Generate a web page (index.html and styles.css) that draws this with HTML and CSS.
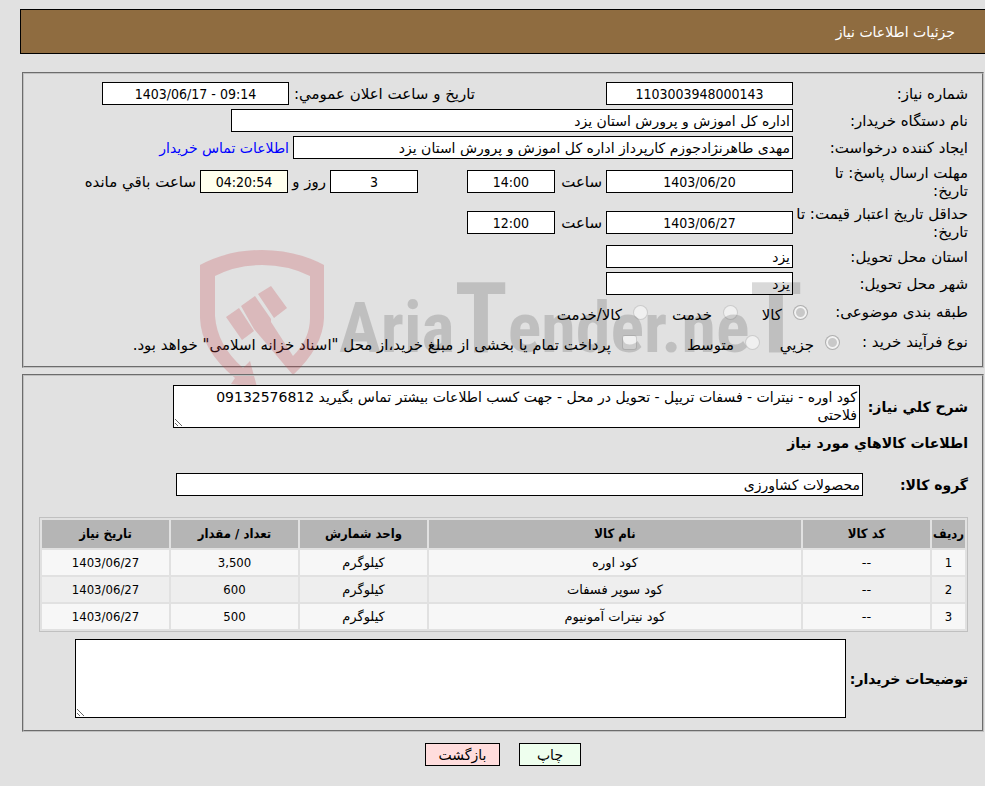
FILE: index.html
```html
<!DOCTYPE html>
<html lang="fa" dir="rtl">
<head>
  <meta charset="utf-8">
  <title>جزئیات اطلاعات نیاز</title>
  <link rel="stylesheet" href="styles.css">
</head>
<body>

<header class="title-bar">جزئیات اطلاعات نیاز</header>

<form class="need-form">
  <fieldset class="panel">
    <div class="row">
      <label class="caption" for="need-no">شماره نیاز:</label>
      <input class="box center" type="text" id="need-no" value="1103003948000143" readonly>
      <label class="announce" for="announce-date">تاریخ و ساعت اعلان عمومي:</label>
      <input class="box center" type="text" id="announce-date" value="1403/06/17 - 09:14" dir="ltr" readonly>
    </div>

    <div class="row">
      <label class="caption" for="buyer-org">نام دستگاه خریدار:</label>
      <input class="box org" type="text" id="buyer-org" value="اداره کل اموزش و پرورش استان یزد" readonly>
    </div>

    <div class="row">
      <label class="caption" for="creator">ایجاد کننده درخواست:</label>
      <input class="box creator" type="text" id="creator" value="مهدی طاهرنژادجوزم کارپرداز اداره کل اموزش و پرورش استان یزد" readonly>
      <a href="#">اطلاعات تماس خریدار</a>
    </div>

    <div class="row tall">
      <label class="caption" for="reply-date">مهلت ارسال پاسخ: تا<br>تاریخ:</label>
      <input class="box center" type="text" id="reply-date" value="1403/06/20" readonly>
      <label class="hour" for="reply-hour">ساعت</label>
      <input class="box small center" type="text" id="reply-hour" value="14:00" readonly>
      <input class="box small center days" type="text" id="days" value="3" readonly>
      <label class="day" for="days">روز و</label>
      <input class="box small center remain" type="text" id="remain" value="04:20:54" readonly>
      <label for="remain">ساعت باقي مانده</label>
    </div>

    <div class="row tall">
      <label class="caption" for="price-date">حداقل تاریخ اعتبار قیمت: تا<br>تاریخ:</label>
      <input class="box center" type="text" id="price-date" value="1403/06/27" readonly>
      <label class="hour" for="price-hour">ساعت</label>
      <input class="box small center" type="text" id="price-hour" value="12:00" readonly>
    </div>

    <div class="row">
      <label class="caption" for="province">استان محل تحویل:</label>
      <input class="box" type="text" id="province" value="یزد" readonly>
    </div>

    <div class="row">
      <label class="caption" for="city">شهر محل تحویل:</label>
      <input class="box" type="text" id="city" value="یزد" readonly>
    </div>

    <div class="row options">
      <span class="caption subject">طبقه بندی موضوعی:</span>
      <label class="option goods"><input type="radio" name="subject" checked disabled> <span>كالا</span></label>
      <label class="option service"><input type="radio" name="subject" disabled> <span>خدمت</span></label>
      <label class="option both"><input type="radio" name="subject" disabled> <span>كالا/خدمت</span></label>
    </div>

    <div class="row options">
      <span class="caption process">نوع فرآیند خرید :</span>
      <label class="option minor"><input type="radio" name="process" checked disabled> <span>جزیي</span></label>
      <label class="option medium"><input type="radio" name="process" disabled> <span>متوسط</span></label>
      <label class="option"><input type="checkbox" disabled> <span>پرداخت تمام یا بخشی از مبلغ خرید،از محل "اسناد خزانه اسلامی" خواهد بود.</span></label>
    </div>

    <svg class="watermark" viewBox="200 250 600 140" width="600" height="140" aria-hidden="true">
      <path class="shield" d="M200 265Q228 250 262 250T324 265V318Q323 347 293 375L254 329L241 306L255 296L271 319L271 322L293 356Q310 339 310 318V276Q288 265 262 265T215 276V316Q217 345 243 368L250 361L257 387L231 384L235 378Q201 350 200 318Z"/>
      <path class="shield" d="M226 317L239 308L254 331L242 340ZM258 294L271 286L287 308L274 318Z"/>
      <text class="brand" x="339" y="352">Aria<tspan class="big">T</tspan>ender.ne<tspan class="big">T</tspan></text>
    </svg>
  </fieldset>

  <fieldset class="panel details">
    <div class="row">
      <label class="strong summary-label" for="summary">شرح کلي نیاز:</label>
      <textarea class="box summary" id="summary" readonly>کود اوره - نیترات - فسفات تریپل - تحویل در محل - جهت کسب اطلاعات بیشتر تماس بگیرید 09132576812
فلاحتی</textarea>
    </div>

    <h2>اطلاعات کالاهاي مورد نیاز</h2>

    <div class="row">
      <label class="strong group-label" for="group">گروه کالا:</label>
      <input class="box group" type="text" id="group" value="محصولات کشاورزی" readonly>
    </div>

    <table class="items">
      <thead>
        <tr>
          <th class="num">ردیف</th>
          <th class="code">کد کالا</th>
          <th>نام کالا</th>
          <th class="unit">واحد شمارش</th>
          <th class="count">تعداد / مقدار</th>
          <th class="date">تاریخ نیاز</th>
        </tr>
      </thead>
      <tbody>
        <tr>
          <td class="digits">1</td>
          <td>--</td>
          <td>کود اوره</td>
          <td>کیلوگرم</td>
          <td class="digits">3,500</td>
          <td class="digits">1403/06/27</td>
        </tr>
        <tr>
          <td class="digits">2</td>
          <td>--</td>
          <td>کود سوپر فسفات</td>
          <td>کیلوگرم</td>
          <td class="digits">600</td>
          <td class="digits">1403/06/27</td>
        </tr>
        <tr>
          <td class="digits">3</td>
          <td>--</td>
          <td>کود نیترات آمونیوم</td>
          <td>کیلوگرم</td>
          <td class="digits">500</td>
          <td class="digits">1403/06/27</td>
        </tr>
      </tbody>
    </table>

    <div class="row notes-row">
      <label class="strong" for="notes">توضیحات خریدار:</label>
      <textarea class="box notes" id="notes" readonly></textarea>
    </div>
  </fieldset>

  <div class="buttons">
    <button class="print" type="button">چاپ</button>
    <button class="back" type="button">بازگشت</button>
  </div>
</form>

</body>
</html>
```
FILE: styles.css
```css
* {
  box-sizing: border-box;
}

body {
  margin: 0;
  background-color: #e1e1e1;
  color: #000;
  font-family: Tahoma, "DejaVu Sans", sans-serif;
  font-size: 14px;
  line-height: 18px;
}

input,
textarea,
button {
  margin: 0;
  font-family: inherit;
  font-size: 14px;
  color: #000;
}

.title-bar {
  margin: 9px 0 18px 20px;
  padding: 13px 30px 12px;
  border: 1px solid #000;
  border-right: none;
  background-color: #8f6c40;
  color: #fff;
}

.need-form {
  margin: 0 1px 0 22px;
}

.panel {
  position: relative;
  margin: 0 0 6px;
  padding: 6px 14px 9px;
  border: 2px groove #c0c0c0;
  min-width: 0;
}

.row {
  display: flex;
  align-items: center;
  gap: 4px;
  min-height: 27px;
}

.row label,
.row a {
  white-space: nowrap;
}

.row label,
.row .caption {
  font-size: 15px;
}

.tall {
  min-height: 41px;
}

.row .caption {
  flex: none;
  width: 171px;
}

a {
  color: #0000ff;
  text-decoration: none;
}

.box {
  width: 187px;
  height: 23px;
  padding: 1px 2px;
  border: 1px solid #000;
  border-radius: 0;
  background-color: #fff;
}

.center,
.digits,
th {
  font-family: Tahoma, "DejaVu Sans Condensed", "DejaVu Sans", sans-serif;
}

.center {
  text-align: center;
}

.announce {
  width: 182px;
  margin-right: 127px;
}

.org {
  width: 562px;
}

.creator {
  width: 500px;
}

.small {
  width: 88px;
}

.hour {
  width: 43px;
}

.days {
  margin-right: 45px;
}

.day {
  width: 34px;
}

.remain {
  background-color: #ffffee;
}

/* radio and checkbox rows */
.options {
  min-height: 30px;
  gap: 0;
}

.option {
  display: flex;
  align-items: center;
  gap: 11px;
}

.option span {
  padding-top: 6px;
}

.row .subject {
  width: 160px;
}

.row .process {
  width: 128px;
}

.goods {
  width: 70px;
}

.service {
  width: 90px;
}

.minor {
  width: 80px;
}

.medium {
  width: 123px;
}

.option input {
  appearance: none;
  flex: none;
  width: 15px;
  height: 15px;
  border: 1px solid rgba(118, 118, 118, 0.3);
  border-radius: 3px;
  background-color: rgba(255, 255, 255, 0.5);
}

.option input[type="radio"] {
  border-radius: 50%;
}

.option input:checked {
  background-color: #c8c8c8;
  box-shadow: inset 0 0 0 2px #f2f2f2;
}

.watermark {
  position: absolute;
  top: 176px;
  left: 176px;
  overflow: visible;
  pointer-events: none;
}

.shield {
  fill: rgba(195, 60, 65, 0.24);
}

.brand {
  direction: ltr;
  fill: rgba(0, 0, 0, 0.15);
  font-family: "Liberation Sans Narrow", "Roboto Condensed", "Liberation Sans", sans-serif;
  font-size: 70px;
  font-weight: bold;
}

.brand .big {
  font-size: 98px;
}

/* goods details */
.details {
  padding: 9px 14px 12px 15px;
}

.row .strong,
h2 {
  margin: 0;
  font-size: 14px;
  font-weight: bold;
}

h2 {
  padding: 6px 0 19px;
}

.summary {
  width: 687px;
  height: 43px;
  padding: 2px;
  line-height: 18px;
}

.summary-label {
  width: 104px;
}

.row .group-label {
  width: 101px;
}

.group {
  width: 687px;
}

.items {
  width: 100%;
  margin: 19px 0 7px;
  border: 1px solid #c0c0c0;
  border-spacing: 2px;
  table-layout: fixed;
  font-size: 13px;
  text-align: center;
}

th,
td {
  height: 25px;
  padding: 0;
}

th {
  height: 28px;
  background-color: #b5b5b5;
}

td {
  background-color: #f7f7f7;
}

tr:nth-child(even) td {
  background-color: #eee;
}

.num {
  width: 33px;
}

.code,
.unit,
.count,
.date {
  width: 127px;
}

.notes {
  width: 771px;
  height: 79px;
}

.buttons {
  display: flex;
  justify-content: center;
  gap: 19px;
  margin-top: 11px;
}

.buttons button {
  height: 23px;
  padding: 0 11px;
  border: 1px solid #000;
}

.print {
  width: 62px;
  background-color: #eeffee;
}

.back {
  width: 75px;
  background-color: #ffdddd;
}
```
